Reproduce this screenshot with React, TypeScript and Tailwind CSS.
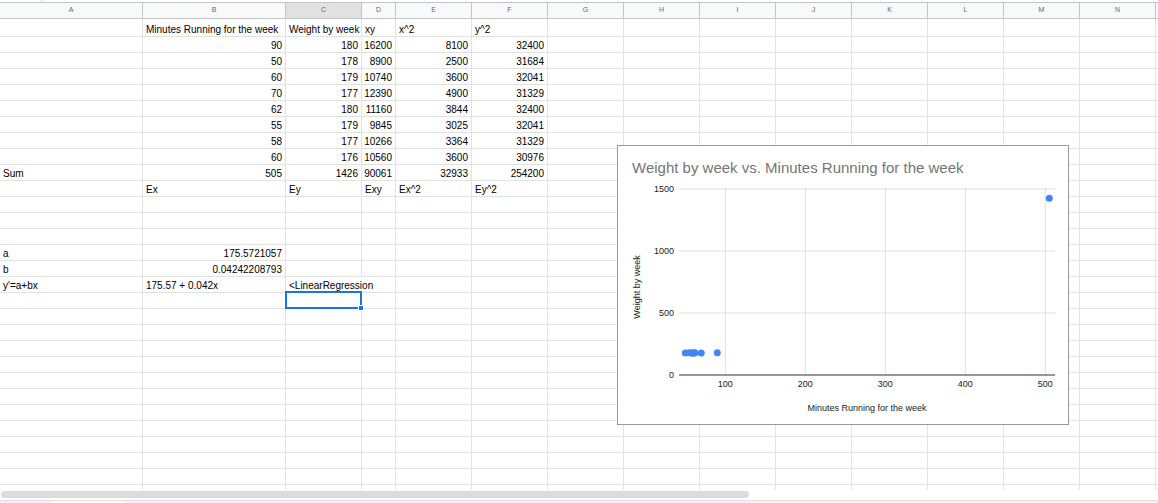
import React from 'react';

const COLS = ['A', 'B', 'C', 'D', 'E', 'F', 'G', 'H', 'I', 'J', 'K', 'L', 'M', 'N', ''];

// cell values for columns A-F, everything else is blank
const sheet: string[][] = [
  ['', 'Minutes Running for the week', 'Weight by week', 'xy', 'x^2', 'y^2'],
  ['', '90', '180', '16200', '8100', '32400'],
  ['', '50', '178', '8900', '2500', '31684'],
  ['', '60', '179', '10740', '3600', '32041'],
  ['', '70', '177', '12390', '4900', '31329'],
  ['', '62', '180', '11160', '3844', '32400'],
  ['', '55', '179', '9845', '3025', '32041'],
  ['', '58', '177', '10266', '3364', '31329'],
  ['', '60', '176', '10560', '3600', '30976'],
  ['Sum', '505', '1426', '90061', '32933', '254200'],
  ['', 'Ex', 'Ey', 'Exy', 'Ex^2', 'Ey^2'],
  [],
  [],
  [],
  ['a', '175.5721057'],
  ['b', '0.04242208793'],
  ["y'=a+bx", '175.57 + 0.042x', '<LinearRegression'],
];

const TOTAL_ROWS = 30;

const points = [
  { x: 90, y: 180 },
  { x: 50, y: 178 },
  { x: 60, y: 179 },
  { x: 70, y: 177 },
  { x: 62, y: 180 },
  { x: 55, y: 179 },
  { x: 58, y: 177 },
  { x: 60, y: 176 },
  { x: 505, y: 1426 },
];

const px = (v: number) => 27.3 + v * 0.8;
const py = (v: number) => 229 - v * 0.124;

const isNumber = (s: string) => /^-?[\d.]+$/.test(s);

const ScatterChart: React.FC = () => {
  const yTicks = [1500, 1000, 500];
  const xTicks = [100, 200, 300, 400, 500];
  return (
    <div className="absolute left-[617px] top-[145px] z-10 w-[452px] h-[280px] border border-[#9a9a9a] bg-white">
      <svg width="450" height="278" className="block" style={{ fontFamily: '"Liberation Sans", Arial, sans-serif' }}>
        <text x="14" y="27" fontSize="15" fill="#757575">
          Weight by week vs. Minutes Running for the week
        </text>

        {xTicks.map((t) => (
          <line key={`vx${t}`} x1={px(t)} x2={px(t)} y1={42} y2={229} stroke="#e0e0e0" strokeWidth="1" />
        ))}
        {yTicks.map((t) => (
          <line key={`hy${t}`} x1={61} x2={437} y1={py(t)} y2={py(t)} stroke="#e0e0e0" strokeWidth="1" />
        ))}
        <line x1={61} x2={437} y1={229} y2={229} stroke="#333" strokeWidth="1" />

        {[...yTicks, 0].map((t) => (
          <text key={`ly${t}`} x="56" y={py(t) + 3} fontSize="9" fill="#222" textAnchor="end">
            {t}
          </text>
        ))}
        {xTicks.map((t) => (
          <text key={`lx${t}`} x={px(t)} y="241" fontSize="9" fill="#222" textAnchor="middle">
            {t}
          </text>
        ))}

        <text x="249" y="265" fontSize="9" fill="#222" textAnchor="middle">
          Minutes Running for the week
        </text>
        <text x="22" y="141" fontSize="9" fill="#222" textAnchor="middle" transform="rotate(-90 22 141)">
          Weight by week
        </text>

        {points.map((p, i) => (
          <circle key={i} cx={px(p.x)} cy={py(p.y)} r="3.5" fill="#4285f4" />
        ))}
      </svg>
    </div>
  );
};

export default function App() {
  return (
    <div
      className="relative w-[1158px] h-[503px] overflow-hidden bg-white flex flex-col text-black"
      style={{ fontFamily: '"Liberation Sans", Arial, sans-serif' }}
    >
      {/* top strip */}
      <div className="h-[2px] flex">
        <div className="w-[42px] border-r border-[#dadada]" />
      </div>

      {/* sheet grid */}
      <div className="flex-1 overflow-hidden">
        <div className="grid grid-cols-[143px_143px_76px_34px_repeat(10,76px)_1fr]">
          {COLS.map((c, i) => (
            <div
              key={`h${i}`}
              className={`h-[17px] border-t border-b border-r border-[#c4c4c4] flex items-center justify-center text-[7px] text-[#666] ${
                c === 'C' ? 'bg-[#e1e1e1]' : 'bg-[#f8f9fa]'
              }`}
            >
              {c}
            </div>
          ))}

          {Array.from({ length: TOTAL_ROWS }).map((_, r) =>
            COLS.map((_, c) => {
              const value = sheet[r]?.[c] ?? '';
              const overflowC = r === 16 && c === 2;
              const selected = r === 17 && c === 2;
              return (
                <div
                  key={`r${r}c${c}`}
                  className={`relative flex items-end px-[3px] pb-[1px] border-b border-[#e2e2e2] text-[10px] leading-none whitespace-nowrap overflow-visible ${
                    r === 0 ? 'h-[18px]' : 'h-[16px]'
                  } ${overflowC ? 'border-r-0 pr-[4px]' : 'border-r'} ${
                    isNumber(value) ? 'justify-end' : 'justify-start'
                  }`}
                >
                  {value}
                  {selected && (
                    <div className="absolute -top-[2px] -left-[1px] w-[77px] h-[18px] border-2 border-[#1a73e8] z-[5]">
                      <div className="absolute -right-[4px] -bottom-[4px] w-[6px] h-[6px] bg-[#1a73e8] border border-white" />
                    </div>
                  )}
                </div>
              );
            })
          )}
        </div>
      </div>

      {/* horizontal scrollbar */}
      <div className="h-[10px] bg-white pt-[1px] pl-[1px]">
        <div className="w-[748px] h-[7px] rounded-full bg-[#dadce0]" />
      </div>

      {/* sheet tabs */}
      <div className="h-[3px] bg-[#f1f3f4] border-t border-[#e0e0e0] flex">
        <div className="ml-[52px] w-[74px] bg-white" />
      </div>

      <ScatterChart />
    </div>
  );
}
